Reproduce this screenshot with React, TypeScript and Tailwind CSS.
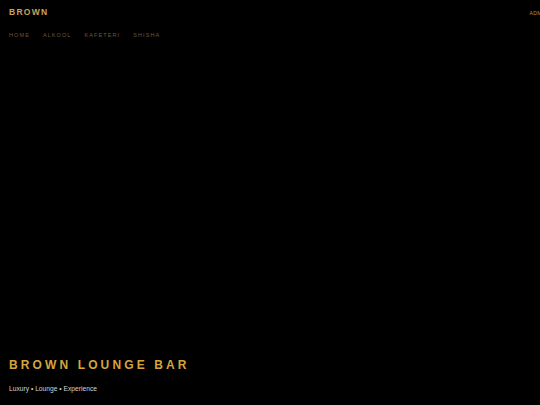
export default function App() {
  return (
    <div className="h-[405px] w-[540px] overflow-hidden bg-black flex flex-col font-['Liberation_Sans',Arial,sans-serif]">
      <header className="flex items-start justify-between pl-[9px] pt-[8px]">
        <div className="text-[8.5px] leading-none font-bold tracking-[0.15em] text-[#c9a55e]">
          BROWN
        </div>
        <div className="mt-[3px] mr-[-8px] text-[5px] leading-none tracking-[0.1em] text-[#b8975a]">
          ADMIN
        </div>
      </header>

      <nav className="flex gap-[13px] pl-[9px] pt-[16px] text-[5.5px] leading-none tracking-[0.2em] text-[#6e5934]">
        <span>HOME</span>
        <span>ALKOOL</span>
        <span>KAFETERI</span>
        <span>SHISHA</span>
      </nav>

      <section className="mt-auto pl-[9px] pb-[12px]">
        <h1 className="text-[12px] leading-none font-bold tracking-[0.26em] text-[#d6a43d]">
          BROWN LOUNGE BAR
        </h1>
        <p className="mt-[15.5px] text-[6.7px] leading-none text-[#d4d4d4]">
          Luxury • Lounge • Experience
        </p>
      </section>
    </div>
  );
}
